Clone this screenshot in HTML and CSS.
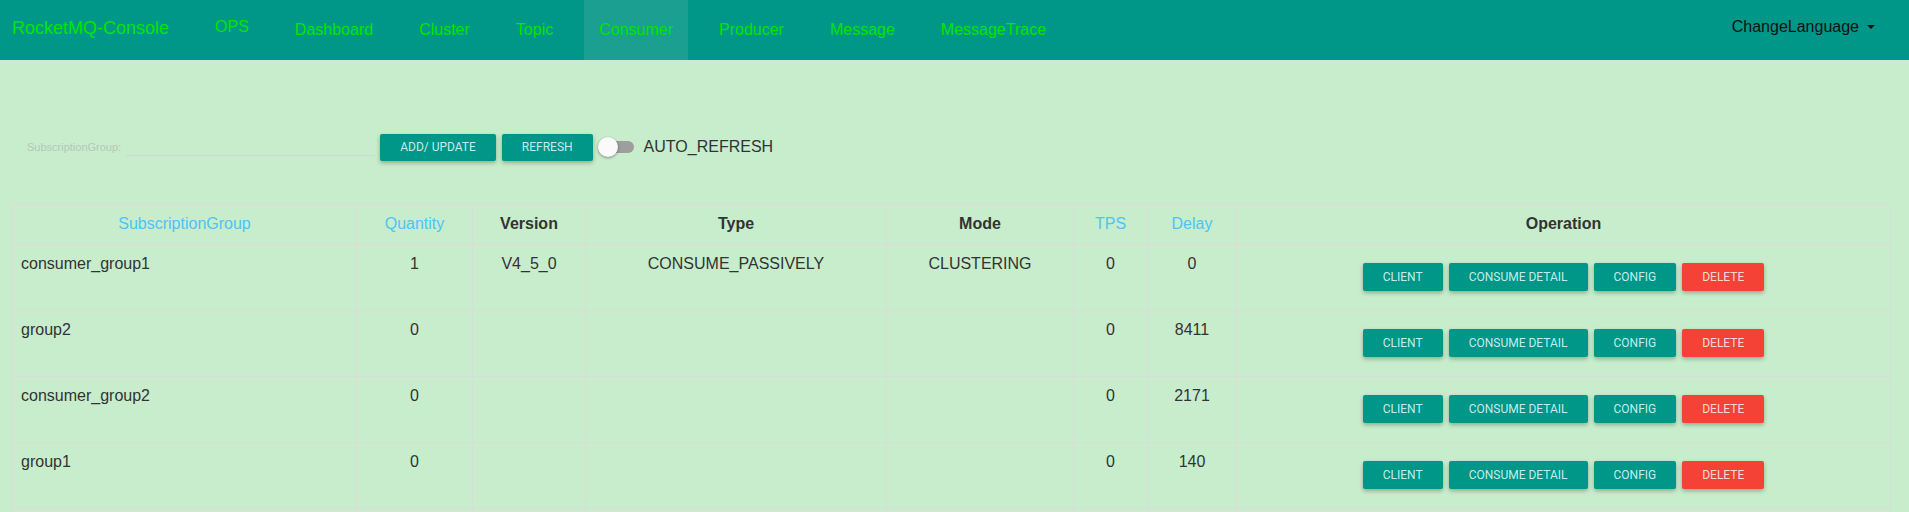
FILE: index.html
```html
<!DOCTYPE html>
<html>
<head>
<meta charset="utf-8">
<title>RocketMQ-Console</title>
<link rel="stylesheet" href="styles.css">
</head>
<body>
<header class="navbar">
  <a class="brand">RocketMQ-Console</a>
  <a class="nav-link nav-ops">OPS</a>
  <a class="nav-link">Dashboard</a>
  <a class="nav-link">Cluster</a>
  <a class="nav-link">Topic</a>
  <a class="nav-link active">Consumer</a>
  <a class="nav-link">Producer</a>
  <a class="nav-link">Message</a>
  <a class="nav-link">MessageTrace</a>
  <div class="lang">ChangeLanguage<span class="caret"></span></div>
</header>

<main class="content">
  <div class="toolbar">
    <label class="field-label">SubscriptionGroup:</label>
    <input class="field-input" type="text">
    <button class="btn btn-primary">ADD/ UPDATE</button>
    <button class="btn btn-primary">REFRESH</button>
    <div class="switch"><span class="switch-track"></span><span class="switch-knob"></span></div>
    <span class="switch-label">AUTO_REFRESH</span>
  </div>

  <table class="grid">
    <colgroup>
      <col class="c-group"><col class="c-qty"><col class="c-ver"><col class="c-type"><col class="c-mode"><col class="c-tps"><col class="c-delay"><col class="c-op">
    </colgroup>
    <thead>
      <tr>
        <th class="sort">SubscriptionGroup</th>
        <th class="sort">Quantity</th>
        <th>Version</th>
        <th>Type</th>
        <th>Mode</th>
        <th class="sort">TPS</th>
        <th class="sort">Delay</th>
        <th>Operation</th>
      </tr>
    </thead>
    <tbody>
      <tr>
        <td class="left">consumer_group1</td><td>1</td><td>V4_5_0</td><td>CONSUME_PASSIVELY</td><td>CLUSTERING</td><td>0</td><td>0</td>
        <td><div class="op-buttons"><button class="btn btn-primary">CLIENT</button><button class="btn btn-primary">CONSUME DETAIL</button><button class="btn btn-primary">CONFIG</button><button class="btn btn-danger">DELETE</button></div></td>
      </tr>
      <tr>
        <td class="left">group2</td><td>0</td><td></td><td></td><td></td><td>0</td><td>8411</td>
        <td><div class="op-buttons"><button class="btn btn-primary">CLIENT</button><button class="btn btn-primary">CONSUME DETAIL</button><button class="btn btn-primary">CONFIG</button><button class="btn btn-danger">DELETE</button></div></td>
      </tr>
      <tr>
        <td class="left">consumer_group2</td><td>0</td><td></td><td></td><td></td><td>0</td><td>2171</td>
        <td><div class="op-buttons"><button class="btn btn-primary">CLIENT</button><button class="btn btn-primary">CONSUME DETAIL</button><button class="btn btn-primary">CONFIG</button><button class="btn btn-danger">DELETE</button></div></td>
      </tr>
      <tr>
        <td class="left">group1</td><td>0</td><td></td><td></td><td></td><td>0</td><td>140</td>
        <td><div class="op-buttons"><button class="btn btn-primary">CLIENT</button><button class="btn btn-primary">CONSUME DETAIL</button><button class="btn btn-primary">CONFIG</button><button class="btn btn-danger">DELETE</button></div></td>
      </tr>
      <tr class="filler">
        <td></td><td></td><td></td><td></td><td></td><td></td><td></td><td></td>
      </tr>
    </tbody>
  </table>
</main>
</body>
</html>
```

FILE: styles.css
```css
* { box-sizing: border-box; }

html, body {
  margin: 0;
  padding: 0;
  background: #c7edcc;
  font-family: "Liberation Sans", Arial, sans-serif;
  font-size: 16px;
  color: #333;
  overflow: hidden;
}

/* ---------- navbar ---------- */
.navbar {
  display: flex;
  align-items: stretch;
  gap: 16px;
  height: 60px;
  background: #009688;
}

.brand {
  padding: 18px 15px 0 12px;
  font-size: 18px;
  line-height: 20px;
  color: #00e600;
  white-space: nowrap;
}

.nav-link {
  padding: 20px 15px 0;
  font-size: 16px;
  line-height: 20px;
  color: #00e600;
  white-space: nowrap;
}

.nav-link.nav-ops { padding-top: 17px; }

.nav-link.active { background: #1a9f91; }

.lang {
  margin-left: auto;
  padding: 17px 34px 0 0;
  font-size: 16px;
  line-height: 20px;
  color: #111;
  white-space: nowrap;
}

.caret {
  display: inline-block;
  width: 0;
  height: 0;
  margin-left: 8px;
  vertical-align: middle;
  border-top: 4px solid #111;
  border-left: 4px solid transparent;
  border-right: 4px solid transparent;
  position: relative;
  top: -1px;
}

/* ---------- content ---------- */
.content {
  padding: 0 19px 0 12px;
}

.toolbar {
  display: flex;
  align-items: center;
  height: 28px;
  margin-top: 73px;
  padding-left: 15px;
}

.field-label {
  font-size: 11px;
  color: #b7c6ba;
  white-space: nowrap;
}

.field-input {
  width: 249px;
  height: 18px;
  margin: 0 5px;
  padding: 0;
  border: none;
  border-bottom: 1px solid #d2d6d2;
  background: transparent;
  outline: none;
}

.btn {
  height: 28px;
  padding: 0 20px;
  border: none;
  border-radius: 2px;
  font-family: Roboto, "Liberation Sans", sans-serif;
  font-size: 12px;
  color: rgba(220, 250, 245, 0.9);
  text-transform: uppercase;
  box-shadow: 0 2px 4px rgba(0, 0, 0, 0.28);
  cursor: pointer;
  white-space: nowrap;
}

.btn-primary { background: #009688; }
.btn-danger { background: #f44336; color: rgba(255, 225, 222, 0.95); }

.toolbar .btn { height: 27px; margin-right: 6px; }

.switch {
  position: relative;
  width: 35px;
  height: 20px;
  display: flex;
  align-items: center;
}

.switch-track {
  display: block;
  width: 35px;
  height: 12px;
  border-radius: 6px;
  background: #9e9e9e;
}

.switch-knob {
  position: absolute;
  left: -1px;
  top: 0;
  width: 20px;
  height: 20px;
  border-radius: 50%;
  background: #fafafa;
  box-shadow: 0 1px 3px rgba(0, 0, 0, 0.4);
}

.switch-label {
  margin-left: 10px;
  font-size: 16px;
  color: #333;
}

/* ---------- table ---------- */
.grid {
  width: 100%;
  margin-top: 43px;
  border-collapse: collapse;
  table-layout: fixed;
}

.c-group { width: 344px; }
.c-qty { width: 116px; }
.c-ver { width: 113px; }
.c-type { width: 301px; }
.c-mode { width: 187px; }
.c-tps { width: 74px; }
.c-delay { width: 89px; }
.c-op { width: 654px; }

.grid th,
.grid td {
  border: 1px solid #dadcda;
  padding: 8px;
  line-height: 22px;
  text-align: center;
  vertical-align: top;
  font-size: 16px;
  color: #333;
}

.grid th { font-weight: bold; padding-bottom: 9px; }
.grid th.sort { font-weight: normal; color: #4fc3f7; }

.grid td.left { text-align: left; }

.grid tr.filler td { height: 64px; }

.op-buttons {
  display: flex;
  justify-content: center;
  gap: 6px;
  margin: 10px 0 11px;
}
```
